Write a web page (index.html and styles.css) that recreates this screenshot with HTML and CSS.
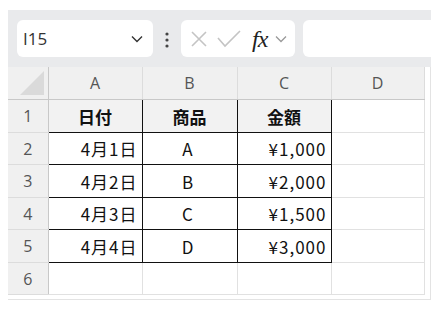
FILE: index.html
```html
<!DOCTYPE html>
<html lang="ja">
<head>
    <meta charset="UTF-8">
    <meta name="viewport" content="width=device-width, initial-scale=1.0">
    <title>Sheet</title>
    <link rel="stylesheet" href="styles.css">
</head>
<body>
    <div class="app">
        <!-- Formula bar -->
        <div class="toolbar">
            <div class="namebox">
                <span class="cell-ref">I15</span>
                <svg class="chev" width="14" height="10" viewBox="0 0 14 10"><path d="M2 2.5 L7 7.5 L12 2.5" fill="none" stroke="#333" stroke-width="1.4"/></svg>
            </div>
            <div class="dots">
                <svg width="6" height="18" viewBox="0 0 6 18"><circle cx="3" cy="3" r="1.6" fill="#444"/><circle cx="3" cy="9" r="1.6" fill="#444"/><circle cx="3" cy="15" r="1.6" fill="#444"/></svg>
            </div>
            <div class="fxbox">
                <svg width="20" height="20" viewBox="0 0 20 20"><path d="M3 3 L17 17 M17 3 L3 17" stroke="#c4c4c4" stroke-width="1.6" fill="none"/></svg>
                <svg width="26" height="22" viewBox="0 0 26 22"><path d="M2 10 L9 18 L24 3" stroke="#c4c4c4" stroke-width="1.6" fill="none"/></svg>
                <span class="fx">fx</span>
                <svg width="14" height="10" viewBox="0 0 14 10"><path d="M2 2.5 L7 7.5 L12 2.5" fill="none" stroke="#999" stroke-width="1.3"/></svg>
            </div>
            <div class="formula"></div>
        </div>

        <!-- Grid -->
        <div class="sheet">
            <table class="grid">
                <colgroup>
                    <col class="c-head"><col class="c-a"><col class="c-b"><col class="c-c"><col class="c-d">
                </colgroup>
                <tr class="col-heads">
                    <th class="corner"><span class="tri"></span></th>
                    <th>A</th><th>B</th><th>C</th><th>D</th>
                </tr>
                <tr class="r1">
                    <th>1</th>
                    <td class="hd">日付</td><td class="hd">商品</td><td class="hd">金額</td><td></td>
                </tr>
                <tr class="r2">
                    <th>2</th>
                    <td class="bx num">4月1日</td><td class="bx mid">A</td><td class="bx num">¥1,000</td><td></td>
                </tr>
                <tr class="r3">
                    <th>3</th>
                    <td class="bx num">4月2日</td><td class="bx mid">B</td><td class="bx num">¥2,000</td><td></td>
                </tr>
                <tr class="r4">
                    <th>4</th>
                    <td class="bx num">4月3日</td><td class="bx mid">C</td><td class="bx num">¥1,500</td><td></td>
                </tr>
                <tr class="r5">
                    <th>5</th>
                    <td class="bx num">4月4日</td><td class="bx mid">D</td><td class="bx num">¥3,000</td><td></td>
                </tr>
                <tr class="r6">
                    <th>6</th>
                    <td></td><td></td><td></td><td></td>
                </tr>
            </table>
        </div>
    </div>
</body>
</html>
```

FILE: styles.css
```css
body {
    margin: 0;
    padding: 0;
    background-color: #fff;
    font-family: "Noto Sans CJK JP", "Noto Sans", sans-serif;
}

.app {
    margin: 10px 0 0 8px;
    width: 423px;
    height: 290px;
    background-color: #fff;
    overflow: hidden;
}

/* Formula bar */
.toolbar {
    display: flex;
    align-items: center;
    height: 57px;
    padding-left: 9px;
    background-color: #e9eaec;
    box-sizing: border-box;
}

.namebox,
.fxbox,
.formula {
    height: 37px;
    background-color: #fff;
    border-radius: 6px;
    display: flex;
    align-items: center;
    box-sizing: border-box;
}

.namebox {
    width: 136px;
    padding: 0 9px 0 6px;
    justify-content: space-between;
}

.cell-ref {
    font-family: "Open Sans", sans-serif;
    font-size: 17px;
    color: #333;
}

.dots {
    width: 28px;
    display: flex;
    justify-content: center;
    padding-top: 2px;
}

.fxbox {
    width: 114px;
    padding: 0 4px 0 8px;
    gap: 7px;
}

.fx {
    font-family: "Liberation Serif", serif;
    font-style: italic;
    font-size: 24px;
    color: #222;
    margin-left: 3px;
    letter-spacing: -1px;
    line-height: 1;
}

.formula {
    margin-left: 8px;
    flex: 1;
    border-radius: 6px 0 0 6px;
}

/* Sheet */
.sheet {
    height: 233px;
    width: 423px;
    box-sizing: border-box;
    border-right: 1px solid #e3e3e3;
    border-bottom: 1px solid #e3e3e3;
    padding: 0 5px 5px 0;
    overflow: hidden;
}

.grid {
    border-collapse: collapse;
    table-layout: fixed;
    width: 416px;
}

.c-head { width: 40px; }
.c-a { width: 94px; }
.c-b { width: 95px; }
.c-c { width: 94px; }
.c-d { width: 93px; }

.grid th {
    background-color: #f0f0f0;
    color: #555;
    font-family: "Open Sans", sans-serif;
    font-weight: normal;
    font-size: 16px;
    padding: 0;
    border: 1px solid #dcdcdc;
    border-top: none;
    border-left: none;
}

.col-heads th {
    height: 32px;
    border-bottom: 1px solid #c8c8c8;
}

.grid tr > th:first-child {
    border-right: 1px solid #c8c8c8;
}

.corner {
    position: relative;
}

.tri {
    position: absolute;
    right: 4px;
    bottom: 4px;
    width: 0;
    height: 0;
    border-left: 24px solid transparent;
    border-bottom: 24px solid #dadada;
}

.grid td {
    padding: 0 4px 0 0;
    border: 1px solid #e1e1e1;
    font-size: 17px;
    color: #111;
    white-space: nowrap;
}

.r1 th, .r1 td { height: 32px; }
.r2 th, .r2 td { height: 31px; }
.r3 th, .r3 td { height: 32px; }
.r4 th, .r4 td { height: 31px; }
.r5 th, .r5 td { height: 32px; }
.r6 th, .r6 td { height: 31px; }

.grid td.hd {
    background-color: #f2f2f2;
    font-weight: bold;
    text-align: center;
    border: 1px solid #111;
    padding: 0;
}

.grid td.bx {
    border: 1px solid #111;
}

.num {
    text-align: right;
    letter-spacing: 1px;
}

.mid {
    text-align: center;
    padding: 0;
}
```
